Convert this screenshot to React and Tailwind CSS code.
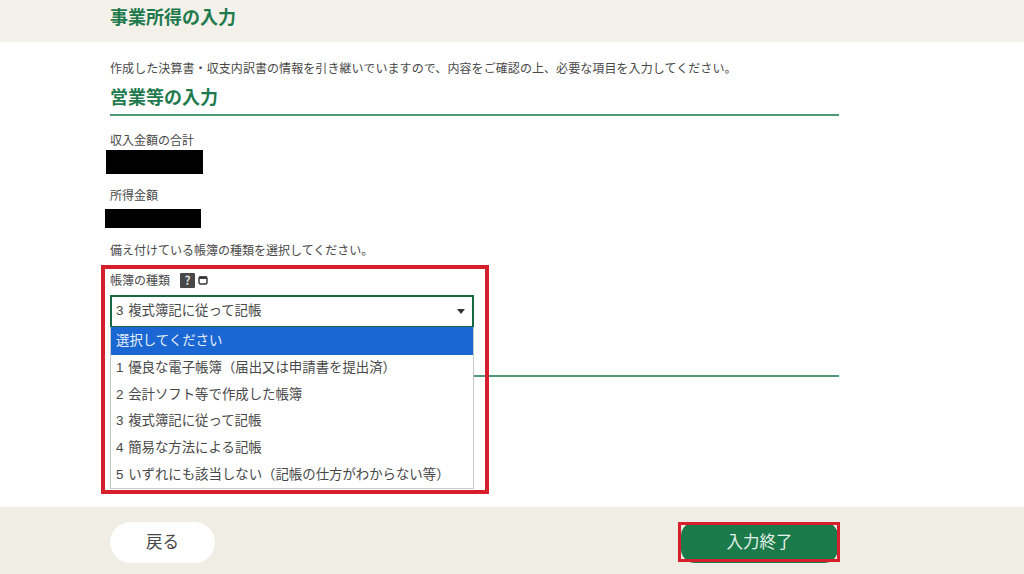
const FONT = "font-['Noto_Sans_CJK_JP','Noto_Sans',sans-serif]";
const SELECT_FONT = "font-['Liberation_Sans','Noto_Sans_CJK_JP',sans-serif]";

const options = [
  "1 優良な電子帳簿（届出又は申請書を提出済）",
  "2 会計ソフト等で作成した帳簿",
  "3 複式簿記に従って記帳",
  "4 簡易な方法による記帳",
  "5 いずれにも該当しない（記帳の仕方がわからない等）",
];

export default function App() {
  return (
    <div className={`${FONT} relative flex h-[574px] w-[1024px] flex-col overflow-hidden bg-white text-[#484848]`}>
      <header className="h-[42px] shrink-0 bg-[#f4f1ea] pl-[110px] pt-[3px]">
        <h1 className="text-[18px] leading-[27px] font-bold text-[#1f7a4d]">事業所得の入力</h1>
      </header>

      <main className="flex-1 pl-[110px]">
        <div className="w-[729px]">
          <p className="mt-[17px] text-[12px] leading-[18px] tracking-[0.08px]">
            作成した決算書・収支内訳書の情報を引き継いでいますので、内容をご確認の上、必要な項目を入力してください。
          </p>
          <h2 className="mt-[7px] h-[32px] border-b-2 border-[#4f9a75] text-[18px] leading-[25px] font-bold text-[#1f7a4d]">
            営業等の入力
          </h2>

          <p className="mt-[15px] text-[12px] leading-[18px]">収入金額の合計</p>
          <div className="-ml-[4px] mt-[1px] h-[24px] w-[97px] bg-black" />

          <p className="mt-[12px] text-[12px] leading-[18px]">所得金額</p>
          <div className="-ml-[5px] mt-[5px] h-[19px] w-[96px] bg-black" />

          <p className="mt-[13px] text-[12px] leading-[18px]">備え付けている帳簿の種類を選択してください。</p>

          <div className="relative mt-[12px]">
            <div className="flex h-[18px] items-center text-[12px] leading-[18px]">
              <span>帳簿の種類</span>
              <span className="ml-[10px] flex h-[15px] w-[15px] items-center justify-center rounded-[1px] bg-[#484848] text-[12px] leading-none font-bold text-[#ddd]">
                ?
              </span>
              <svg className="ml-[3px]" width="10" height="10" viewBox="0 0 10 10" fill="none">
                <rect x="1" y="2" width="8" height="7" rx="1.5" stroke="#333" strokeWidth="1.4" />
                <rect x="1" y="1.5" width="8" height="2.4" fill="#333" />
              </svg>
            </div>

            <div className={`${SELECT_FONT} mt-[6px] flex h-[33px] w-[364px] items-center justify-between border-2 border-[#166a42] bg-white pl-[4px] pr-[7px] text-[13.4px] [word-spacing:1px]`}>
              <span>3 複式簿記に従って記帳</span>
              <svg width="8" height="5" viewBox="0 0 8 5">
                <path d="M0 0H8L4 5Z" fill="#333" />
              </svg>
            </div>

            <ul className={`${SELECT_FONT} absolute left-0 top-[56px] z-10 h-[162px] w-[364px] border-x border-b border-[#c9c9c9] bg-white text-[13.4px] [word-spacing:1px]`}>
              <li className="flex h-[28px] items-center bg-[#1a66d2] pl-[5px] text-[#e8f0fb]">選択してください</li>
              {options.map((o) => (
                <li key={o} className="flex h-[26.6px] items-center pl-[5px]">
                  {o}
                </li>
              ))}
            </ul>

            <div className="absolute -left-[9px] -top-[6px] z-20 h-[229px] w-[388px] border-4 border-[#d61f2c]" />
          </div>

          <div className="mt-[47px] h-[2px] bg-[#4f9a75]" />
        </div>
      </main>

      <footer className="flex h-[67px] shrink-0 items-start justify-between bg-[#f0ede4] pl-[110px] pr-[186px] pt-[15px]">
        <button className="h-[41px] w-[105px] rounded-full bg-white pb-[3px] text-[16.5px] text-[#484848]">戻る</button>
        <div className="relative">
          <button className="h-[41px] w-[157px] rounded-[14px] bg-[#1b7a4a] pb-[3px] text-[16.5px] text-[#e4f1ea]">入力終了</button>
          <div className="absolute -left-[3px] top-0 h-[40px] w-[162px] border-[3px] border-[#d61f2c]" />
        </div>
      </footer>
    </div>
  );
}
